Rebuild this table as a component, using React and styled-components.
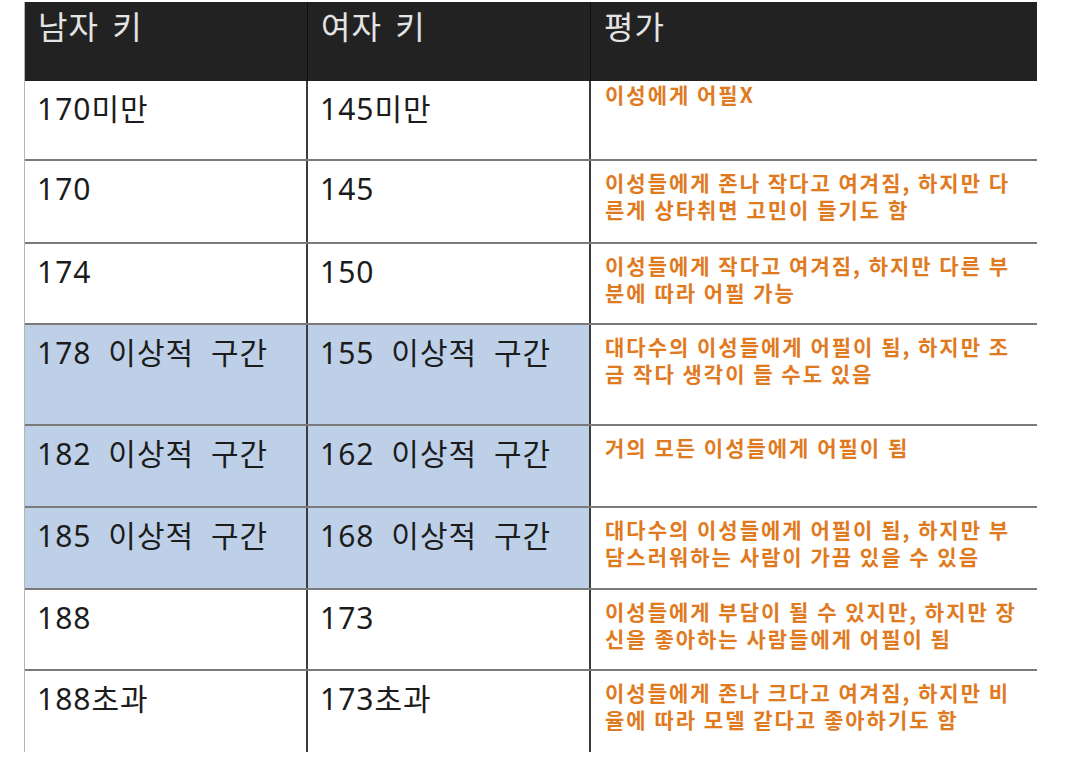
import React from "react";
import styled, { createGlobalStyle } from "styled-components";

const GlobalStyle = createGlobalStyle`
  body {
    margin: 0;
    background: #ffffff;
    font-family: "Noto Sans", "Noto Sans CJK KR", sans-serif;
  }
`;

const rows = [
  { male: "170미만", female: "145미만", height: 80, tight: true, lines: ["이성에게 어필X"] },
  { male: "170", female: "145", height: 83, lines: ["이성들에게 존나 작다고 여겨짐, 하지만 다", "른게 상타취면 고민이 들기도 함"] },
  { male: "174", female: "150", height: 81, lines: ["이성들에게 작다고 여겨짐, 하지만 다른 부", "분에 따라 어필 가능"] },
  { male: "178 이상적 구간", female: "155 이상적 구간", height: 101, ideal: true, lines: ["대다수의 이성들에게 어필이 됨, 하지만 조", "금 작다 생각이 들 수도 있음"] },
  { male: "182 이상적 구간", female: "162 이상적 구간", height: 82, ideal: true, lines: ["거의 모든 이성들에게 어필이 됨"] },
  { male: "185 이상적 구간", female: "168 이상적 구간", height: 82, ideal: true, lines: ["대다수의 이성들에게 어필이 됨, 하지만 부", "담스러워하는 사람이 가끔 있을 수 있음"] },
  { male: "188", female: "173", height: 81, lines: ["이성들에게 부담이 될 수 있지만, 하지만 장", "신을 좋아하는 사람들에게 어필이 됨"] },
  { male: "188초과", female: "173초과", height: 81, last: true, lines: ["이성들에게 존나 크다고 여겨짐, 하지만 비", "율에 따라 모델 같다고 좋아하기도 함"] },
];

function App() {
  return (
    <Page>
      <GlobalStyle />
      <Table>
        <HeaderRow>
          <HeadCell>남자 키</HeadCell>
          <HeadCell>여자 키</HeadCell>
          <HeadCell $last>평가</HeadCell>
        </HeaderRow>
        {rows.map((r) => (
          <Row key={r.male} $height={r.height} $last={r.last}>
            <KeyCell $ideal={r.ideal}>{r.male}</KeyCell>
            <KeyCell $ideal={r.ideal}>{r.female}</KeyCell>
            <EvalCell $tight={r.tight}>
              {r.lines.map((l) => (
                <Line key={l}>{l}</Line>
              ))}
            </EvalCell>
          </Row>
        ))}
      </Table>
    </Page>
  );
}

export default App;

const Page = styled.div`
  padding: 2px 0 0 24px;
  width: 1070px;
  height: 762px;
  box-sizing: border-box;
  overflow: hidden;
`;

const Table = styled.div`
  width: 1012px;
  border-left: 1px solid #b5b5b5;
  font-family: "Noto Sans", "Noto Sans CJK KR", sans-serif;
`;

const HeaderRow = styled.div`
  display: grid;
  grid-template-columns: 283px 283px 1fr;
  height: 79px;
  background: #222222;
`;

const HeadCell = styled.div`
  box-sizing: border-box;
  padding: 5px 0 0 13px;
  font-size: 32px;
  line-height: 40px;
  letter-spacing: 1px;
  word-spacing: 4px;
  color: #e4e4e4;
  border-right: ${({ $last }) => ($last ? "none" : "1px solid #0e0e0e")};
`;

const Row = styled.div`
  display: grid;
  grid-template-columns: 283px 283px 1fr;
  height: ${({ $height }) => $height}px;
  box-sizing: border-box;
  border-bottom: ${({ $last }) => ($last ? "none" : "2px solid #7a7a7a")};
`;

const KeyCell = styled.div`
  box-sizing: border-box;
  padding: 8px 0 0 12px;
  font-size: 30px;
  line-height: 40px;
  letter-spacing: 1px;
  word-spacing: 8px;
  color: #1c1c1c;
  background: ${({ $ideal }) => ($ideal ? "#bdd0e8" : "#ffffff")};
  border-right: 2px solid #3c3c3c;
`;

const EvalCell = styled.div`
  box-sizing: border-box;
  padding: ${({ $tight }) => ($tight ? "0" : "8px")} 0 0 14px;
  font-family: "Noto Sans CJK KR", sans-serif;
  font-size: 21px;
  font-weight: 700;
  line-height: 27px;
  letter-spacing: 2px;
  color: #e07a1f;
`;

const Line = styled.div`
  white-space: nowrap;
`;
